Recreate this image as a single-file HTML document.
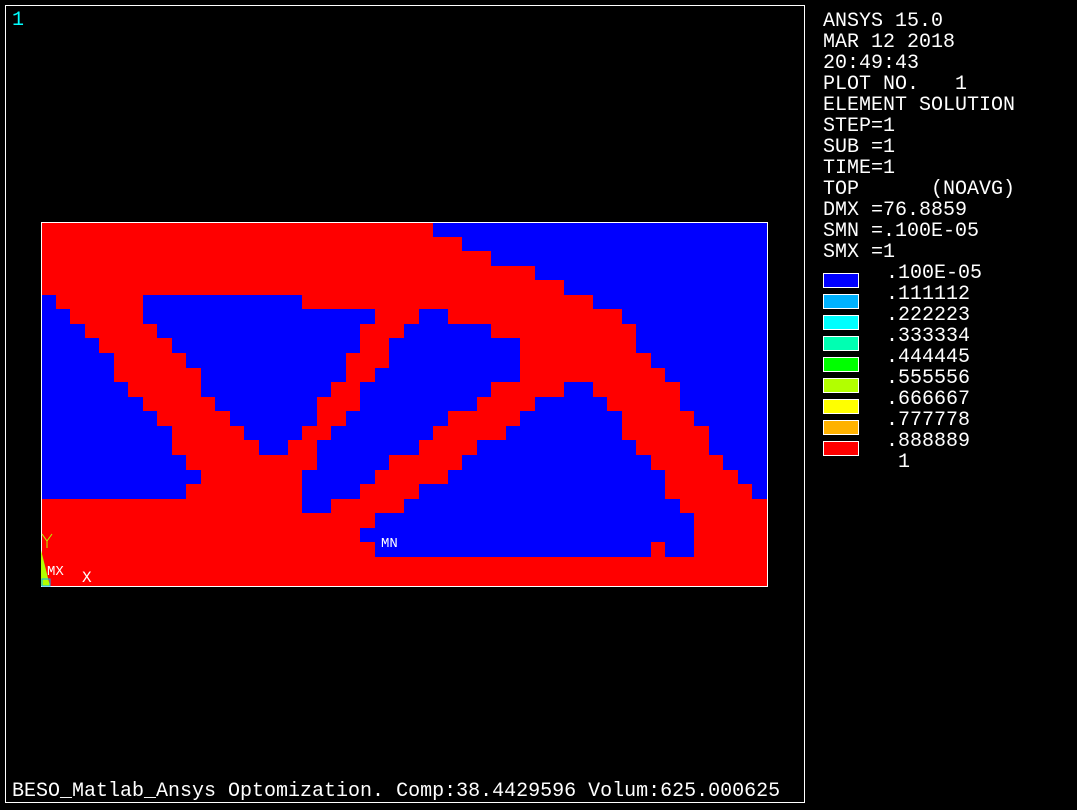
<!DOCTYPE html>
<html><head><meta charset="utf-8">
<style>
html,body{margin:0;padding:0;background:#000;}
body{width:1077px;height:810px;position:relative;overflow:hidden;font-family:"Liberation Mono",monospace;font-size:20px;color:#fff;}
.t{position:absolute;white-space:pre;line-height:21px;}
.frame{position:absolute;left:5px;top:5px;width:800px;height:798px;border:1px solid #fff;box-sizing:border-box;}
.box{position:absolute;left:823px;width:36px;height:15px;border:1px solid #fff;box-sizing:border-box;}
</style></head><body>
<div class="frame"></div>
<div class="t" style="left:12px;top:10px;color:#00ffff">1</div>
<svg id="plot" style="position:absolute;left:41px;top:222px" width="727" height="365" shape-rendering="crispEdges"></svg>
<div class="t" style="left:823px;top:11px">ANSYS 15.0
MAR 12 2018
20:49:43
PLOT NO.   1
ELEMENT SOLUTION
STEP=1
SUB =1
TIME=1
TOP      (NOAVG)
DMX =76.8859
SMN =.100E-05
SMX =1</div>
<div class="box" style="top:273px;background:#0000ff"></div>
<div class="box" style="top:294px;background:#00b2ff"></div>
<div class="box" style="top:315px;background:#00ffff"></div>
<div class="box" style="top:336px;background:#00ffb2"></div>
<div class="box" style="top:357px;background:#00ff00"></div>
<div class="box" style="top:378px;background:#b2ff00"></div>
<div class="box" style="top:399px;background:#ffff00"></div>
<div class="box" style="top:420px;background:#ffb200"></div>
<div class="box" style="top:441px;background:#ff0000"></div>
<div class="t" style="left:886px;top:263px">.100E-05
.111112
.222223
.333334
.444445
.555556
.666667
.777778
.888889
 1</div>
<div class="t" style="left:12px;top:781px">BESO_Matlab_Ansys Optomization. Comp:38.4429596 Volum:625.000625</div>
<svg style="position:absolute;left:38px;top:530px" width="70" height="60">
<polygon points="3,20 3,56 12,56" fill="#b2ff00"/>
<path d="M4,4 L9,11 L14,4 M9,11 L9,18" stroke="#b2ff00" stroke-width="1" fill="none"/>
<rect x="4" y="49" width="8" height="7" fill="none" stroke="#00b2ff"/>
</svg>
<div class="t" style="left:47px;top:564px;font-size:14px;line-height:16px">MX</div>
<div class="t" style="left:82px;top:569px;font-size:16px;line-height:18px">X</div>
<div class="t" style="left:381px;top:536px;font-size:14px;line-height:16px">MN</div>
<script>
var rows=["R27 23","R29 21","R31 19","R34 16","R36 14","B1 6 11 20 12","B2 5 16 3 2 12 10","B3 5 14 3 6 10 9","B4 5 13 2 9 8 9","B5 5 11 3 9 9 8","B5 6 10 2 10 10 7","B6 5 9 2 9 5 2 6 6","B7 5 7 3 8 4 5 5 6","B8 5 6 2 7 5 7 5 5","B9 5 4 2 7 5 8 6 4","B9 6 2 2 7 4 11 5 4","B10 9 5 5 13 5 3","B11 7 5 5 15 5 2","B10 8 4 4 17 6 1","R18 2 5 19 6","R23 22 5","R22 23 5","R23 19 1 2 5","R50","R50"];
var s=document.getElementById('plot'),cw=726/50,ch=364/25,h='';
rows.forEach(function(r,i){var c=r[0]=='R'?1:0;var n=r.slice(1).split(' ').map(Number);var x=0;
n.forEach(function(k){var x0=Math.round(x*cw),x1=Math.round((x+k)*cw),y0=Math.round(i*ch),y1=Math.round((i+1)*ch);
h+='<rect x="'+x0+'" y="'+y0+'" width="'+(x1-x0)+'" height="'+(y1-y0)+'" fill="'+(c?'#ff0000':'#0000ff')+'"/>';x+=k;c=1-c;});});
h+='<rect x="0.5" y="0.5" width="726" height="364" fill="none" stroke="#fff" stroke-width="1"/>';
s.innerHTML=h;
</script>
</body></html>
